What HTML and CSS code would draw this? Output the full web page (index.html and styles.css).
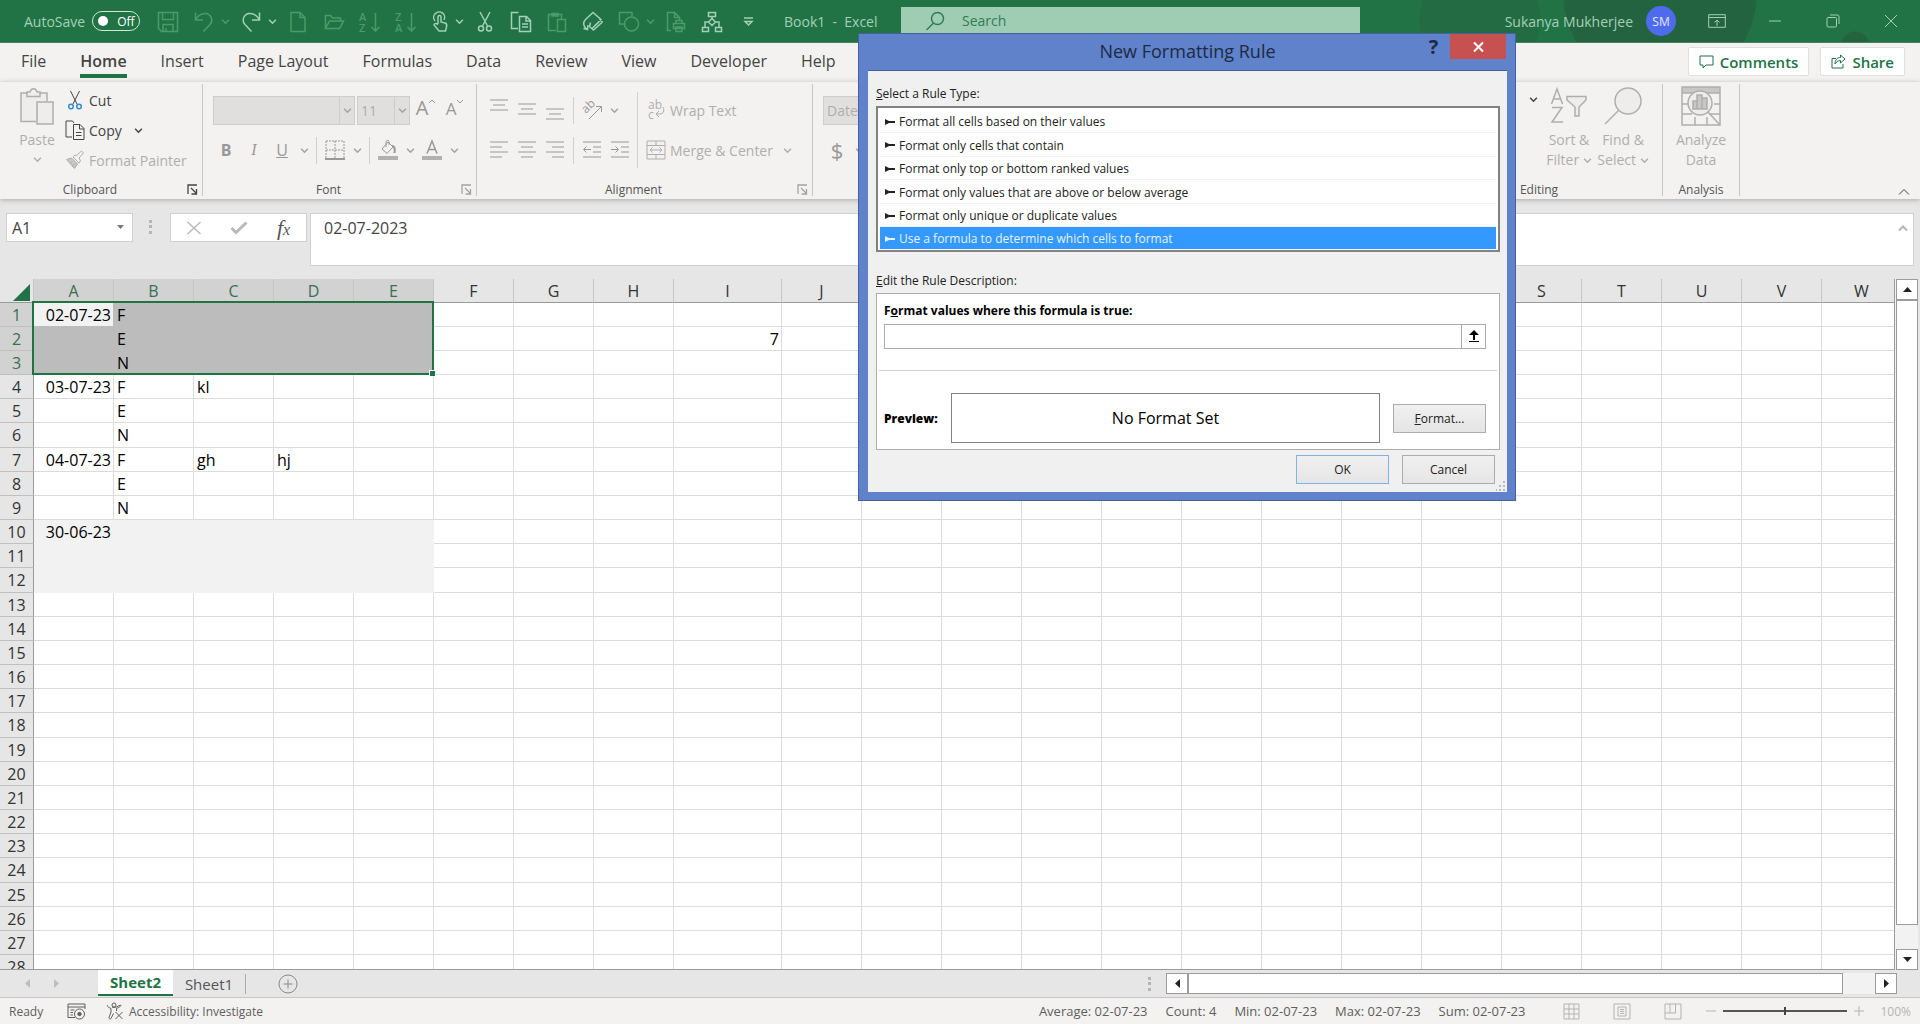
FILE: index.html
```html
<!DOCTYPE html>
<html lang="en">
<head>
    <meta charset="utf-8" />
    <title>Book1 - Excel</title>
    <link rel="stylesheet" href="styles.css">
</head>
<body>
    <svg class="sprite" aria-hidden="true">
        <symbol id="caret" viewBox="0 0 8 8"><path d="M1 2.5l3 3 3-3" fill="none" stroke="currentColor" stroke-width="1.4" /></symbol>
        <symbol id="launcher" viewBox="0 0 11 11"><path d="M1 10V1h9M4 4l5 5M9.500 5v5H4.500" fill="none" stroke="currentColor" stroke-width="1.300" /></symbol>
    </svg>

    <!-- Title bar -->
    <header class="titlebar">
        <label class="autosave">AutoSave
            <span class="switch"><input type="checkbox" class="switch-input" /><span class="knob"></span>Off</span>
        </label>
        <div class="quick">
            <button class="q dim" aria-label="Save"><svg width="22" height="22" viewBox="0 0 22 22"><path d="M1.500 1.500h19v19h-16l-3-3zM5.500 1.500v7h11v-7M6 20.500v-7h10v7M9 17v3.500" /></svg></button>
            <button class="q dim" aria-label="Undo"><svg width="20" height="22" viewBox="0 0 20 22"><path d="M1.500 1.500v7.500h7.500M1.500 9C4 4.500 8 2 12 2.500c5.500 1 7.500 7 4 11L9.500 20.500" /></svg></button>
            <button class="q-caret dim" aria-label="Undo list"><svg width="9" height="9"><use href="#caret" /></svg></button>
            <button class="q" aria-label="Redo"><svg width="20" height="22" viewBox="0 0 20 22"><path d="M18.500 1.500v7.500H11M18.500 9C16 4.500 12 2 8 2.500c-5.500 1-7.500 7-4 11L10.500 20.500" /></svg></button>
            <button class="q-caret" aria-label="Redo list"><svg width="9" height="9"><use href="#caret" /></svg></button>
            <button class="q dim" aria-label="New"><svg width="16" height="22" viewBox="0 0 16 22"><path d="M1 1.500h9l5 5v14H1zM10 1.500v5h5" /></svg></button>
            <button class="q dim" aria-label="Open"><svg width="21" height="18" viewBox="0 0 21 18"><path d="M1.500 15.500V2.500h5l2 2.500h8v3M1.500 15.500l4-7.500h14l-4 7.500z" /></svg></button>
            <button class="q dim" aria-label="Sort A to Z"><svg width="22" height="22" viewBox="0 0 22 22"><text x="0" y="10">A</text><text x="0" y="21">Z</text><path d="M16.500 2v18M12.500 16l4 4 4-4" /></svg></button>
            <button class="q dim" aria-label="Sort Z to A"><svg width="22" height="22" viewBox="0 0 22 22"><text x="0" y="10">Z</text><text x="0" y="21">A</text><path d="M16.500 2v18M12.500 16l4 4 4-4" /></svg></button>
            <button class="q narrow" aria-label="Touch mode"><svg width="16" height="22" viewBox="0 0 16 22"><path d="M6 13V6c0-2 3-2 3 0v5l4 1c2 .500 2 2 1.500 4l-1 4H7l-5-6c0-1.500 1.500-2 4-.500M3 10a5.500 5.500 0 1 1 9-1" /></svg></button>
            <button class="q-caret" aria-label="Touch mode options"><svg width="9" height="9"><use href="#caret" /></svg></button>
            <button class="q" aria-label="Cut"><svg width="16" height="22" viewBox="0 0 16 22"><path d="M3 1l7.500 14M13 1L5.500 15" /><circle cx="4" cy="17.500" r="2.500" /><circle cx="12" cy="17.500" r="2.500" /></svg></button>
            <button class="q" aria-label="Copy"><svg width="22" height="22" viewBox="0 0 22 22"><path d="M8 17.500H1.500v-16h7M9.500 5.500h7l4 4v11h-11zM16 5.500V10h4.500M12 13h6M12 16h6" /></svg></button>
            <button class="q dim" aria-label="Paste"><svg width="20" height="22" viewBox="0 0 20 22"><path d="M9 19.500H1.500v-16h13V8M5 5V2.500h6V5zM10.500 8.500h8v12h-8z" /></svg></button>
            <button class="q" aria-label="Clear"><svg width="22" height="22" viewBox="0 0 22 22"><path d="M3.500 8.500L11 1.500l8 7-6.500 6.500M3.500 8.500c-3 3-2 7 1 9.500M1.500 17.500l4 1 .500-4.500M20.500 11l-9 8-4-3.500 1-4M20.500 11l-3-3M10 17.500l7-6.500" /></svg></button>
            <button class="q dim" aria-label="Shapes"><svg width="22" height="22" viewBox="0 0 22 22"><path d="M7 13H1.500V1.500H14V5" /><circle cx="13.500" cy="13" r="7" /></svg></button>
            <button class="q-caret dim" aria-label="Shapes list"><svg width="9" height="9"><use href="#caret" /></svg></button>
            <button class="q dim" aria-label="Quick print"><svg width="20" height="22" viewBox="0 0 20 22"><path d="M5 19.500H1.500v-18h7l5 5V10M8.500 1.500v5h5M7.500 17.500v-5h11v5zM10 12.500V9.500h6v3M10 16h6v4.500h-6z" /></svg></button>
            <button class="q" aria-label="Diagram"><svg width="22" height="22" viewBox="0 0 22 22"><path d="M7.500 1.500h7v4h-7zM11 5.500v3M11 7.500l3.500 3.500L11 14.500 7.500 11zM7.500 11H4v5M14.500 11H18v5M1.500 16.500h6v4h-6zM14.500 16.500h6v4h-6z" /></svg></button>
            <button class="q" aria-label="Customize toolbar"><svg width="11" height="10" viewBox="0 0 11 10"><path d="M1 1h9M2 4.500l3.500 3.500L9 4.500z" /></svg></button>
        </div>
        <div class="doc-name">Book1&nbsp; -&nbsp; Excel</div>
        <div class="search">
            <svg width="20" height="20" viewBox="0 0 20 20"><circle cx="12.500" cy="7.500" r="6" /><path d="M8.500 12L1.500 19" /></svg>
            <input type="text" class="search-input" placeholder="Search" aria-label="Search" />
        </div>
        <div class="account">
            <span>Sukanya Mukherjee</span>
            <button class="avatar" aria-label="Account">SM</button>
        </div>
        <div class="window-buttons">
            <button aria-label="Ribbon display"><svg width="18" height="14" viewBox="0 0 18 14"><path d="M.700.700h16.600v12.600H.700zM.700 3.500h16.600M9 12V6M6.500 8.500L9 6l2.500 2.500" /></svg></button>
            <button aria-label="Minimize"><svg width="14" height="14" viewBox="0 0 14 14"><path d="M1 7h12" /></svg></button>
            <button aria-label="Restore"><svg width="14" height="14" viewBox="0 0 14 14"><path d="M1 4.500c0-.500.500-1 1-1h7.500c.500 0 1 .500 1 1V12c0 .500-.500 1-1 1H2c-.500 0-1-.500-1-1zM4 1h7c1.500 0 2 .500 2 2v7" /></svg></button>
            <button aria-label="Close"><svg width="14" height="14" viewBox="0 0 14 14"><path d="M1 1l12 12M13 1L1 13" /></svg></button>
        </div>
    </header>

    <!-- Ribbon tabs -->
    <nav class="tabs">
        <a href="#">File</a>
        <a href="#" class="active">Home</a>
        <a href="#">Insert</a>
        <a href="#">Page Layout</a>
        <a href="#">Formulas</a>
        <a href="#">Data</a>
        <a href="#">Review</a>
        <a href="#">View</a>
        <a href="#">Developer</a>
        <a href="#">Help</a>
        <div class="tab-actions">
            <button class="action"><svg width="15" height="14" viewBox="0 0 15 14"><path d="M1 1h13v9H7l-3 3v-3H1z" /></svg>Comments</button>
            <button class="action"><svg width="15" height="15" viewBox="0 0 15 15"><path d="M5 4.500H1v9.500h11v-4M9.500 1l4.500 4-4.500 4V6.500C7 6.500 5 8 4 10c0-4 2-6.500 5.500-6.500z" /></svg>Share</button>
        </div>
    </nav>

    <!-- Ribbon -->
    <section class="ribbon">
        <div class="group clipboard">
            <div class="group-body">
                <button class="big off paste">
                    <svg width="36" height="40" viewBox="0 0 36 40"><path class="fill" d="M2 7h26v29H2zM18 16h16v22H18z" /><path d="M17 35.500H2V7h6M21 7h7v8M8 10.500V6h3c1-4.500 6-4.500 7 0h3v4.500zM18 16h16v22H18z" /></svg>
                    Paste
                    <svg class="paste-caret" width="9" height="9"><use href="#caret" /></svg>
                </button>
                <div class="stack">
                    <button class="line"><svg width="20" height="20" viewBox="0 0 20 20"><path d="M5.500 1L12 14M14.500 1L8 14" /><circle class="blue" cx="6" cy="16.500" r="2.300" /><circle class="blue" cx="14" cy="16.500" r="2.300" /></svg>Cut</button>
                    <button class="line"><svg width="20" height="20" viewBox="0 0 20 20"><path d="M7 17H1V1h6.500l1.500 2M8.500 4.500h6.500l4 4v11H8.500zM14.500 4.500V9H19M11 12.500h5.500M11 15.500h5.500" /></svg>Copy<svg class="copy-caret" width="9" height="9"><use href="#caret" /></svg></button>
                    <button class="line off"><svg width="20" height="20" viewBox="0 0 20 20"><path class="shade" d="M1.500 9.500l5-1.500 6 6-3 4.500z" /><path d="M1.500 9.500l5-1.500 6 6-3 4.500zM5 13l2-1M7.500 16l2-2M8 7l6 6 1.500-2-1.500-3 4.500-5-2-2-5 4.500L10 5z" /></svg>Format Painter</button>
                </div>
            </div>
            <div class="group-label">Clipboard<button class="launcher on" aria-label="Clipboard settings"><svg width="11" height="11"><use href="#launcher" /></svg></button></div>
        </div>

        <div class="group font">
            <div class="group-body rows">
                <div class="row">
                    <span class="combo"><select class="font-name" disabled aria-label="Font"><option></option></select><i><svg width="9" height="9"><use href="#caret" /></svg></i></span>
                    <span class="combo"><select class="font-size" disabled aria-label="Font size"><option>11</option></select><i><svg width="9" height="9"><use href="#caret" /></svg></i></span>
                    <button class="tool grow" aria-label="Increase font size">A<svg width="8" height="8" viewBox="0 0 8 8"><path d="M1 5l3-3 3 3" /></svg></button>
                    <button class="tool shrink" aria-label="Decrease font size">A<svg width="8" height="8" viewBox="0 0 8 8"><path d="M1 2l3 3 3-3" /></svg></button>
                </div>
                <div class="row">
                    <button class="tool bold">B</button>
                    <button class="tool italic">I</button>
                    <button class="tool underline">U</button>
                    <button class="drop" aria-label="Underline styles"><svg width="9" height="9"><use href="#caret" /></svg></button>
                    <span class="sep"></span>
                    <button class="tool" aria-label="Borders"><svg width="20" height="20" viewBox="0 0 20 20"><path stroke-dasharray="2 1" d="M1 1h18v17M1 1v17M10 1v17M1 10h18" /><path stroke-width="2" d="M0 19h20" /></svg></button>
                    <button class="drop" aria-label="Border styles"><svg width="9" height="9"><use href="#caret" /></svg></button>
                    <span class="sep"></span>
                    <button class="tool" aria-label="Fill color"><svg width="20" height="20" viewBox="0 0 20 20"><path d="M10 2L4 9l5 4.500L15 7zM8 7V1.500c0-1.500 3-1.500 3 0V5" /><path stroke-width="2" d="M14 6c3 0 3 3 2.500 7" /><path class="bar" d="M0 16h20v4H0z" /></svg></button>
                    <button class="drop" aria-label="Fill colors"><svg width="9" height="9"><use href="#caret" /></svg></button>
                    <button class="tool" aria-label="Font color"><svg width="20" height="20" viewBox="0 0 20 20"><path stroke-width="1.500" d="M5 13.500L10 1l5 12.500M6.500 9.500h7" /><path class="bar" d="M0 16h20v4H0z" /></svg></button>
                    <button class="drop" aria-label="Font colors"><svg width="9" height="9"><use href="#caret" /></svg></button>
                </div>
            </div>
            <div class="group-label">Font<button class="launcher" aria-label="Font settings"><svg width="11" height="11"><use href="#launcher" /></svg></button></div>
        </div>

        <div class="group alignment">
            <div class="group-body">
                <div class="rows">
                    <div class="row">
                        <button class="tool" aria-label="Top align"><svg width="20" height="22" viewBox="0 0 20 22"><path d="M1 1h18M4 6h12M1 11h18" /></svg></button>
                        <button class="tool" aria-label="Middle align"><svg width="20" height="22" viewBox="0 0 20 22"><path d="M1 5h18M4 10h12M1 15h18" /></svg></button>
                        <button class="tool" aria-label="Bottom align"><svg width="20" height="22" viewBox="0 0 20 22"><path d="M1 10h18M4 15h12M1 20h18" /></svg></button>
                        <span class="sep"></span>
                        <button class="tool" aria-label="Orientation"><svg width="22" height="20" viewBox="0 0 22 20"><text transform="rotate(-45 5 14)" x="5" y="14">ab</text><path d="M8 19L20 7M15 6.500h5.500V12" /></svg></button>
                        <button class="drop" aria-label="Orientation options"><svg width="9" height="9"><use href="#caret" /></svg></button>
                    </div>
                    <div class="row">
                        <button class="tool" aria-label="Align left"><svg width="20" height="18" viewBox="0 0 20 18"><path d="M1 1h18M1 6h12M1 11h18M1 16h12" /></svg></button>
                        <button class="tool" aria-label="Center"><svg width="20" height="18" viewBox="0 0 20 18"><path d="M1 1h18M4 6h12M1 11h18M4 16h12" /></svg></button>
                        <button class="tool" aria-label="Align right"><svg width="20" height="18" viewBox="0 0 20 18"><path d="M1 1h18M7 6h12M1 11h18M7 16h12" /></svg></button>
                        <span class="sep"></span>
                        <button class="tool" aria-label="Decrease indent"><svg width="20" height="18" viewBox="0 0 20 18"><path d="M1 1h18M11 6h8M11 11h8M1 16h18M9 8.500H1.500M4.500 5.500l-3 3 3 3" /></svg></button>
                        <button class="tool" aria-label="Increase indent"><svg width="20" height="18" viewBox="0 0 20 18"><path d="M1 1h18M11 6h8M11 11h8M1 16h18M1 8.500h7.500M5.500 5.500l3 3-3 3" /></svg></button>
                    </div>
                </div>
                <span class="tall-sep"></span>
                <div class="rows">
                    <button class="line off"><svg width="20" height="20" viewBox="0 0 20 20"><text x="2" y="9">ab</text><text x="2" y="19">c</text><path d="M17 7c2 4 0 7-3 7h-4M13 11l-3 3 3 3" /></svg>Wrap Text</button>
                    <button class="line off"><svg width="20" height="20" viewBox="0 0 20 20"><path d="M1 1h18v18H1zM1 5.500h18M1 14.500h18M10 1v4.500M10 14.500V19M4 10h12M6.500 7.500L4 10l2.500 2.500M13.500 7.500L16 10l-2.500 2.500" /></svg>Merge &amp; Center<svg class="merge-caret" width="9" height="9"><use href="#caret" /></svg></button>
                </div>
            </div>
            <div class="group-label">Alignment<button class="launcher" aria-label="Alignment settings"><svg width="11" height="11"><use href="#launcher" /></svg></button></div>
        </div>

        <div class="group number">
            <div class="group-body rows">
                <div class="row">
                    <span class="combo"><select class="format" disabled aria-label="Number format"><option>Date</option></select><i><svg width="9" height="9"><use href="#caret" /></svg></i></span>
                </div>
                <div class="row">
                    <button class="tool dollar" aria-label="Accounting format">$</button>
                    <button class="drop" aria-label="Accounting formats"><svg width="9" height="9"><use href="#caret" /></svg></button>
                </div>
            </div>
        </div>

        <div class="group editing">
            <div class="group-body">
                <button class="drop sum" aria-label="AutoSum options"><svg width="9" height="9"><use href="#caret" /></svg></button>
                <button class="big off">
                    <svg width="38" height="40" viewBox="0 0 38 40"><path d="M1.500 18L7 3l5.500 15M3.500 13h7M2 21.500h10L2 36h11" /><path class="fill" d="M17 10.500h19v3.500l-7 7v9h-4v-9l-8-7z" /><path d="M17 10.500h19v3.500l-7 7v9h-4v-9l-8-7z" /></svg>
                    Sort &amp;
                    <span>Filter <svg width="9" height="9"><use href="#caret" /></svg></span>
                </button>
                <button class="big off">
                    <svg width="38" height="40" viewBox="0 0 38 40"><circle class="fill" cx="24" cy="15" r="13" /><circle cx="24" cy="15" r="13" /><path d="M15 24L1 38" /></svg>
                    Find &amp;
                    <span>Select <svg width="9" height="9"><use href="#caret" /></svg></span>
                </button>
            </div>
            <div class="group-label">Editing</div>
        </div>

        <div class="group analysis">
            <div class="group-body">
                <button class="big off">
                    <svg width="40" height="40" viewBox="0 0 40 40"><path class="shade" d="M1 1h38v6H1z" /><path d="M1 1h38v38H1zM1 7h38M1 18h6M33 18h6M1 28h10M28 28h11M14 31v8M26 31v8" /><circle class="fill" cx="19" cy="17" r="12" /><circle cx="19" cy="17" r="12" /><path class="shade" d="M12 15h4v8h-4zM16 9h5v14h-5zM21 12h5v11h-5z" /><path d="M12 15h4v8h-4zM16 9h5v14h-5zM21 12h5v11h-5zM27 26l12 13" /></svg>
                    Analyze
                    <span>Data</span>
                </button>
            </div>
            <div class="group-label">Analysis</div>
        </div>
        <button class="collapse" aria-label="Collapse ribbon"><svg width="12" height="9" viewBox="0 0 12 9"><path d="M1 7.500l5-5 5 5" /></svg></button>
    </section>

    <!-- Formula bar -->
    <section class="formula-bar">
        <div class="name-box">
            <input type="text" value="A1" aria-label="Name box" />
            <svg width="7" height="5" viewBox="0 0 7 5"><path d="M0 0h7L3.500 4z" /></svg>
        </div>
        <span class="dots"></span>
        <div class="fx-buttons">
            <button aria-label="Cancel entry"><svg width="16" height="14" viewBox="0 0 16 14"><path d="M1.500 1l13 12M14.500 1l-13 12" /></svg></button>
            <button aria-label="Enter"><svg width="18" height="14" viewBox="0 0 18 14"><path stroke-width="3" d="M1.500 7L6 11.500 16.500 1.500" /></svg></button>
            <button class="fx" aria-label="Insert function">f<small>x</small></button>
        </div>
        <div class="formula">
            <input type="text" value="02-07-2023" aria-label="Formula" />
            <svg width="10" height="8" viewBox="0 0 10 8"><path d="M1 6.500l4-4 4 4" /></svg>
        </div>
    </section>

    <!-- Worksheet -->
    <main class="sheet">
        <div class="grid">
            <table id="cells"></table>
            <div class="selection"></div>
        </div>
        <div class="vscroll">
            <button aria-label="Scroll up"><svg width="9" height="5" viewBox="0 0 9 5"><path d="M0 5h9L4.500 0z" /></svg></button>
            <div class="vthumb"></div>
            <button aria-label="Scroll down"><svg width="9" height="5" viewBox="0 0 9 5"><path d="M0 0h9L4.500 5z" /></svg></button>
        </div>
    </main>

    <section class="sheet-tabs">
        <div class="arrows">
            <button aria-label="Previous sheet"><svg width="5" height="9" viewBox="0 0 5 9"><path d="M5 0v9L0 4.500z" /></svg></button>
            <button aria-label="Next sheet"><svg width="5" height="9" viewBox="0 0 5 9"><path d="M0 0v9l5-4.500z" /></svg></button>
        </div>
        <button class="sheet-tab current">Sheet2</button>
        <button class="sheet-tab">Sheet1</button>
        <button class="add" aria-label="New sheet"><svg width="20" height="20" viewBox="0 0 20 20"><circle cx="10" cy="10" r="9" /><path d="M10 5.500v9M5.500 10h9" /></svg></button>
        <span class="dots"></span>
        <div class="hscroll">
            <button aria-label="Scroll left"><svg width="5" height="9" viewBox="0 0 5 9"><path d="M5 0v9L0 4.500z" /></svg></button>
            <div class="hthumb"></div>
            <button aria-label="Scroll right"><svg width="5" height="9" viewBox="0 0 5 9"><path d="M0 0v9l5-4.500z" /></svg></button>
        </div>
    </section>

    <!-- Status bar -->
    <footer class="status">
        <span class="ready">Ready</span>
        <button aria-label="Record macro"><svg width="19" height="17" viewBox="0 0 19 17"><path d="M8 14.500H1V1h17v5M1 4h17M3.500 7h4M3.500 9.500h2.500M3.500 12h2.500" /><circle cx="12.500" cy="11" r="5" /><circle class="solid" cx="12.500" cy="11" r="1.700" /></svg></button>
        <button class="access"><svg width="18" height="18" viewBox="0 0 18 18"><circle cx="8" cy="3" r="2" /><path d="M1.500 3c-.500 1 0 2 3.500 3.500V10L3 15.500c0 2 1.500 1.500 2 1l2.500-5M6 5c1.500.700 3 .700 4.500 0l4-2c1 .500.500 1.500-4 3.500V9M9.500 10l7 7M16.500 10l-7 7" /></svg>Accessibility: Investigate</button>
        <div class="stats">
            <span>Average: 02-07-23</span>
            <span>Count: 4</span>
            <span>Min: 02-07-23</span>
            <span>Max: 02-07-23</span>
            <span>Sum: 02-07-23</span>
        </div>
        <div class="views">
            <button aria-label="Normal view"><svg width="17" height="17" viewBox="0 0 17 17"><path d="M1 1h15v15H1zM6 1v15M11 1v15M1 6h15M1 11h15" /></svg></button>
            <button aria-label="Page layout view"><svg width="18" height="17" viewBox="0 0 18 17"><path d="M1 1h16v15H1zM5 4h8v9H5zM7 6.500h4M7 8.500h4M7 10.500h4" /></svg></button>
            <button aria-label="Page break view"><svg width="18" height="17" viewBox="0 0 18 17"><path d="M1 1h16v15H1zM6 1v9M1 10h10.500V1" /></svg></button>
        </div>
        <div class="zoom">
            <button aria-label="Zoom out"><svg width="10" height="10" viewBox="0 0 10 10"><path d="M0 5h10" /></svg></button>
            <input type="range" min="0" max="200" value="100" aria-label="Zoom" />
            <button aria-label="Zoom in"><svg width="10" height="10" viewBox="0 0 10 10"><path d="M0 5h10M5 0v10" /></svg></button>
            <span class="percent">100%</span>
        </div>
    </footer>

    <!-- Dialog -->
    <div class="dialog" role="dialog" aria-labelledby="dialog-title">
        <div class="dialog-head">
            <h1 id="dialog-title">New Formatting Rule</h1>
            <div class="dialog-controls">
                <button class="help" aria-label="Help">?</button>
                <button class="close" aria-label="Close"><svg width="11" height="10" viewBox="0 0 11 10"><path d="M1 .500l9 9M10 .500l-9 9" /></svg></button>
            </div>
        </div>
        <div class="dialog-body">
            <div class="caption" id="type-label"><u>S</u>elect a Rule Type:</div>
            <ul class="rule-list" aria-labelledby="type-label">
                <li><svg width="10" height="6" viewBox="0 0 10 6"><path d="M0 0l4 2h6v2H4L0 6z" /></svg>Format all cells based on their values</li>
                <li><svg width="10" height="6" viewBox="0 0 10 6"><path d="M0 0l4 2h6v2H4L0 6z" /></svg>Format only cells that contain</li>
                <li><svg width="10" height="6" viewBox="0 0 10 6"><path d="M0 0l4 2h6v2H4L0 6z" /></svg>Format only top or bottom ranked values</li>
                <li><svg width="10" height="6" viewBox="0 0 10 6"><path d="M0 0l4 2h6v2H4L0 6z" /></svg>Format only values that are above or below average</li>
                <li><svg width="10" height="6" viewBox="0 0 10 6"><path d="M0 0l4 2h6v2H4L0 6z" /></svg>Format only unique or duplicate values</li>
                <li class="selected"><svg width="10" height="6" viewBox="0 0 10 6"><path d="M0 0l4 2h6v2H4L0 6z" /></svg>Use a formula to determine which cells to format</li>
            </ul>
            <div class="caption second"><u>E</u>dit the Rule Description:</div>
            <div class="description">
                <label for="rule-formula">F<u>o</u>rmat values where this formula is true:</label>
                <div class="formula-field">
                    <input type="text" id="rule-formula" />
                    <button aria-label="Collapse dialog"><svg width="10" height="13" viewBox="0 0 10 13"><path d="M5 0l5 5H6v5H4V5H0zM0 11h10v1H0z" /></svg></button>
                </div>
                <hr />
                <div class="preview-row">
                    <strong>Preview:</strong>
                    <div class="preview">No Format Set</div>
                    <button class="btn"><span><u>F</u>ormat...</span></button>
                </div>
            </div>
            <div class="dialog-foot">
                <button class="btn default">OK</button>
                <button class="btn">Cancel</button>
            </div>
            <svg class="grip" width="10" height="10" viewBox="0 0 10 10"><path d="M7 0h2v2H7zM7 4h2v2H7zM7 8h2v2H7zM3 4h2v2H3zM3 8h2v2H3zM0 8h1v2H0z" /></svg>
        </div>
    </div>

    <script src="script.js"></script>
</body>
</html>
```
FILE: styles.css
```css
* {
    box-sizing: border-box;
}

body {
    margin: 0;
    height: 100vh;
    display: flex;
    flex-direction: column;
    overflow: hidden;
    background: #e6e6e6;
    color: #444;
    font-family: "Open Sans", "Noto Sans", sans-serif;
    font-size: 14px;
}

button, input, select {
    font: inherit;
    color: inherit;
    margin: 0;
    padding: 0;
    border: 0;
    background: none;
}

button {
    display: flex;
    align-items: center;
    justify-content: center;
    white-space: nowrap;
}

svg {
    flex: none;
    fill: none;
    stroke: currentColor;
    overflow: visible;
}

svg text {
    fill: currentColor;
    stroke: none;
    font-size: 12px;
}

.sprite {
    position: absolute;
    width: 0;
    height: 0;
}

/* title bar */
.titlebar {
    flex: none;
    height: 43px;
    display: flex;
    align-items: center;
    padding-left: 24px;
    color: #a3d0b6;
    background:
        radial-gradient(circle at 1660px -6px, #24633f 96px, transparent 97px),
        radial-gradient(circle at 1855px 46px, #24633f 14px, transparent 15px),
        radial-gradient(circle at 1480px 20px, #226b43 60px, transparent 61px),
        #217346;
    border-bottom: 1px solid #3f8560;
}

.autosave {
    display: flex;
    align-items: center;
    gap: 7px;
    width: 126px;
    flex: none;
}

.switch {
    display: flex;
    align-items: center;
    gap: 9px;
    width: 48px;
    height: 20px;
    padding-left: 5px;
    border: 1px solid #cfe6d8;
    border-radius: 10px;
    color: #fff;
    font-size: 12px;
}

.switch-input {
    appearance: none;
    position: absolute;
}

.knob {
    width: 10px;
    height: 10px;
    border-radius: 50%;
    background: #fff;
}

.quick {
    display: flex;
    flex: none;
}

.q {
    width: 36px;
    height: 30px;
    padding-top: 2px;
}

.q svg {
    stroke-width: 1.5;
}

.q text {
    font-size: 11px;
    font-weight: 600;
}

.narrow {
    width: 32px;
}

.q-caret {
    width: 15px;
    margin-left: -4px;
}

.dim {
    color: #4c9a6c;
}

.doc-name {
    margin-left: 18px;
    width: 117px;
    flex: none;
    white-space: nowrap;
}

.search {
    align-self: flex-end;
    flex: 0 1 459px;
    height: 35px;
    display: flex;
    align-items: center;
    gap: 17px;
    padding: 0 24px 8px;
    background: #9fcdb3;
    color: #2f7d53;
}

.search svg {
    stroke-width: 1.5;
}

.search-input {
    flex: 1;
}

.search-input::placeholder {
    color: #2f7d53;
}

.account {
    margin-left: auto;
    display: flex;
    align-items: center;
    gap: 13px;
    white-space: nowrap;
}

.avatar {
    width: 30px;
    height: 30px;
    border-radius: 50%;
    background: #4f6bed;
    color: #e4e9ff;
    font-size: 12px;
}

.window-buttons {
    display: flex;
    margin-left: 12px;
}

.window-buttons button {
    width: 58px;
    height: 30px;
}

/* tabs */
.tabs {
    flex: none;
    height: 39px;
    display: flex;
    padding-left: 4px;
    background: #f3f2f1;
    font-size: 16px;
}

.tabs a {
    display: flex;
    align-items: flex-start;
    margin: 0 17px;
    padding-top: 7px;
    height: 35px;
    line-height: 22px;
    white-space: nowrap;
    color: #444;
    text-decoration: none;
}

.tabs .active {
    font-weight: 600;
    border-bottom: 4px solid #217346;
}

.tab-actions {
    margin-left: auto;
    display: flex;
    gap: 11px;
    padding: 4px 15px 0 0;
    font-size: 15px;
}

.action {
    gap: 6px;
    height: 29px;
    padding: 0 10px;
    border: 1px solid #e1dfdd;
    border-radius: 2px;
    background: #fff;
    color: #217346;
    font-weight: 600;
}

/* ribbon */
.ribbon {
    flex: none;
    height: 117px;
    display: flex;
    position: relative;
    background: #f3f2f1;
    box-shadow: 0 1px 5px #aaa;
    color: #a5a3a1;
}

.group {
    display: flex;
    flex-direction: column;
    flex: none;
    height: 112px;
    margin-top: 2px;
    border-right: 1px solid #c8c6c4;
}

.group-body {
    display: flex;
    height: 97px;
}

.group-label {
    display: flex;
    justify-content: center;
    position: relative;
    color: #555;
    font-size: 12px;
    line-height: 18px;
    height: 15px;
}

.clipboard .group-label, .font .group-label, .alignment .group-label {
    padding-right: 22px;
}

.launcher {
    position: absolute;
    right: 4px;
    top: 3px;
    color: #a5a3a1;
}

.launcher.on {
    color: #444;
}

.fill, .shade {
    fill: #efedec;
    stroke: none;
}

.shade {
    fill: #c9c7c5;
}

.bar {
    fill: #b3b1af;
    stroke: none;
}

.blue {
    stroke: #2e8ccf;
    stroke-width: 1.5;
}

.big {
    flex-direction: column;
    justify-content: flex-start;
    line-height: 20px;
    padding-top: 2px;
    height: 94px;
}

.big > svg:first-child {
    margin-bottom: 4px;
    stroke-width: 1.5;
}

.off {
    color: #b0aeac;
}

.clipboard { width: 203px; }
.font { width: 274px; }
.alignment { width: 336px; }
.number { flex: 1; }
.editing { width: 247px; }
.analysis { width: 77px; margin-right: 180px; }

.paste {
    width: 54px;
    margin-left: 10px;
}

.paste-caret {
    margin-top: 5px;
}

.stack {
    padding: 1px 0 0 1px;
}

.line {
    height: 30px;
    gap: 4px;
    justify-content: flex-start;
    color: #444;
}

.line.off {
    color: #b0aeac;
}

.copy-caret {
    margin-left: 8px;
}

.merge-caret {
    margin-left: 6px;
}

.rows {
    display: flex;
    flex-direction: column;
    gap: 10px;
    padding-top: 11px;
}

.row {
    display: flex;
    align-items: center;
    height: 30px;
}

.font .rows, .number .rows {
    padding-left: 10px;
}

.font .row + .row {
    margin-left: -1px;
}

.alignment .group-body {
    padding-left: 8px;
}

.combo {
    display: flex;
    height: 29px;
    margin-right: 2px;
    border: 1px solid #cfcdcb;
    background: #e1dfdd;
}

.combo select {
    appearance: none;
    opacity: 1;
    padding-left: 3px;
    color: #b0aeac;
}

.combo i {
    display: flex;
    align-items: center;
    justify-content: center;
    width: 15px;
    border-left: 1px solid #cfcdcb;
}

.font-name { width: 125px; }
.font-size { width: 36px; }
.format { width: 110px; }

.tool {
    width: 28px;
    height: 30px;
    font-size: 16px;
    color: #9a9896;
}

.grow, .shrink {
    width: 30px;
    align-items: flex-start;
    line-height: 26px;
    font-size: 20px;
}

.grow {
    width: 28px;
}

.grow svg, .shrink svg {
    margin-top: 3px;
}

.shrink {
    font-size: 17px;
    line-height: 28px;
}

.bold { font-weight: 700; }
.italic { font-family: "Liberation Serif", serif; font-style: italic; }
.underline { text-decoration: underline; }
.dollar { font-size: 22px; }

.drop {
    width: 16px;
    height: 30px;
}

.sep {
    width: 1px;
    height: 27px;
    margin: 0 4px;
    background: #d2d0ce;
}

.tall-sep {
    width: 1px;
    height: 76px;
    margin: 8px 8px 0 auto;
    background: #d2d0ce;
}

.alignment .rows:last-child {
    width: 166px;
}

.editing .group-body {
    justify-content: flex-end;
    gap: 2px;
    padding-right: 13px;
}

.editing .big {
    width: 52px;
}

.sum {
    color: #444;
}

.analysis .big {
    width: 100%;
}

.collapse {
    position: absolute;
    right: 10px;
    bottom: 3px;
    color: #444;
}

/* formula bar */
.formula-bar {
    flex: none;
    display: flex;
    align-items: flex-start;
    height: 80px;
    padding: 14px 6px 0;
    font-size: 16px;
}

.name-box, .fx-buttons {
    display: flex;
    align-items: center;
    width: 127px;
    height: 29px;
    padding-right: 8px;
    border: 1px solid #d0d0d0;
    background: #fff;
}

.name-box input {
    width: 110px;
    padding-left: 5px;
}

.name-box path {
    fill: #777;
    stroke: none;
}

.dots {
    width: 3px;
    height: 14px;
    border-left: 3px dotted #b5b5b5;
}

.formula-bar .dots {
    margin: 7px 18px 0 16px;
}

.fx-buttons {
    width: 137px;
    padding: 0;
    color: #b9b9b9;
    stroke-width: 1.5;
}

.fx-buttons button {
    flex: 1;
}

.fx {
    color: #555;
    font-family: "Liberation Serif", serif;
    font-style: italic;
    font-size: 22px;
    line-height: 24px;
}

.fx small {
    font-size: 16px;
    padding-top: 4px;
}

.formula {
    flex: 1;
    display: flex;
    align-items: flex-start;
    height: 53px;
    margin-left: 3px;
    padding: 3px 5px 0 13px;
    border: 1px solid #d0d0d0;
    background: #fff;
}

.formula input {
    flex: 1;
}

.formula svg {
    margin-top: 7px;
    stroke: #b5b5b5;
    stroke-width: 2;
}

/* worksheet */
.sheet {
    flex: 1;
    min-height: 0;
    display: flex;
    padding-right: 2px;
}

.grid {
    flex: 1;
    min-width: 0;
    position: relative;
    overflow: hidden;
    border-right: 1px solid #9b9b9b;
    border-bottom: 1px solid #9b9b9b;
}

table {
    table-layout: fixed;
    width: 1902px;
    border-spacing: 0;
    color: #000;
    font-size: 16px;
    line-height: 20px;
}

.col-head { width: 34px; }
.col { width: 80px; }
.col-wide { width: 108px; }

tr {
    height: 24px;
}

tbody tr:nth-child(6n) {
    height: 25px;
}

th {
    padding: 0;
    font-weight: 400;
    color: #333;
    background: #e6e6e6;
    border-right: 1px solid #c6c6c6;
    border-bottom: 1px solid #9b9b9b;
}

tbody th {
    border-right-color: #9b9b9b;
    border-bottom-color: #c0c0c0;
}

th.picked {
    background: #d2d2d2;
    color: #3a6f50;
}

.corner svg {
    display: block;
    margin: 3px 3px 0 auto;
    fill: #217346;
    stroke: none;
}

td {
    padding: 0 3px;
    background: #fff;
    border-right: 1px solid #dcdcdc;
    border-bottom: 1px solid #dcdcdc;
    white-space: nowrap;
}

td.num {
    padding: 0 2px;
    text-align: right;
}

td.in-range {
    background: #bcbcbc;
    border-color: #bcbcbc;
}

td.first {
    background: #f2f2f2;
}

td.shaded {
    background: #f2f2f2;
    border-color: #f2f2f2;
}

.selection {
    position: absolute;
    left: 32px;
    top: 22px;
    width: 402px;
    height: 74px;
    border: 2px solid #217346;
}

.selection::after {
    content: "";
    position: absolute;
    right: -3px;
    bottom: -3px;
    width: 5px;
    height: 5px;
    background: #217346;
    outline: 1px solid #fff;
}

.vscroll {
    width: 23px;
    display: flex;
    flex-direction: column;
    padding-left: 1px;
    background: #f2f2f2;
}

.vscroll button, .hscroll button {
    width: 22px;
    height: 21px;
    border: 1px solid #9b9b9b;
    background: #fff;
}

.vscroll path, .hscroll path, .arrows path {
    fill: #222;
    stroke: none;
}

.vthumb {
    flex: 1;
    margin-bottom: 24px;
    border: 1px solid #9b9b9b;
    background: #fff;
}

/* sheet tabs */
.sheet-tabs {
    flex: none;
    display: flex;
    align-items: center;
    height: 28px;
    padding-right: 23px;
    border-bottom: 1px solid #c6c6c6;
    font-size: 15px;
}

.arrows {
    display: flex;
    gap: 24px;
    width: 98px;
    padding-left: 25px;
}

.sheet-tabs .arrows path {
    fill: #bdbdbd;
}

.sheet-tab {
    height: 20px;
    width: 73px;
    border-right: 1px solid #aaa;
    color: #555;
}

.sheet-tab.current {
    align-self: flex-start;
    width: 75px;
    height: 26px;
    border-right: 0;
    border-bottom: 2px solid #217346;
    background: #fff;
    color: #217346;
    font-weight: 700;
}

.add {
    margin-left: 32px;
    color: #888;
}

.sheet-tabs .dots {
    margin: 0 15px 0 auto;
}

.hscroll {
    flex: 0 1 731px;
    display: flex;
    background: #f2f2f2;
}

.hthumb {
    flex: 1;
    margin-right: 32px;
    border: 1px solid #9b9b9b;
    background: #fff;
}

/* status bar */
.status {
    flex: none;
    display: flex;
    align-items: center;
    height: 26px;
    padding: 0 9px;
    background: #f3f2f1;
    color: #605e5c;
    font-size: 12px;
}

.ready {
    width: 58px;
}

.access {
    gap: 5px;
    margin-left: 20px;
}

.solid {
    fill: currentColor;
}

.stats {
    display: flex;
    gap: 18px;
    margin-left: auto;
    font-size: 13px;
}

.views {
    display: flex;
    gap: 33px;
    margin: 0 24px 0 38px;
    color: #b5b3b1;
}

.zoom {
    display: flex;
    align-items: center;
    gap: 7px;
    color: #b5b3b1;
}

.zoom input {
    appearance: none;
    width: 124px;
    height: 8px;
    background: linear-gradient(#555, #555) center / 100% 2px no-repeat;
}

.zoom input::-webkit-slider-thumb {
    appearance: none;
    width: 2px;
    height: 8px;
    background: #444;
}

.percent {
    margin-left: 9px;
}

/* dialog */
.dialog {
    position: absolute;
    left: 858px;
    top: 33px;
    width: 658px;
    padding: 0 8px 8px 9px;
    border: 1px solid #46609f;
    background: #5f82ca;
    color: #222;
    font-size: 12px;
}

.dialog-head {
    position: relative;
    height: 36px;
    display: flex;
    align-items: center;
    justify-content: center;
    color: #1d2a44;
}

h1 {
    margin: 0;
    font-size: 18px;
    font-weight: 400;
    line-height: 34px;
    height: 36px;
}

.dialog-controls {
    position: absolute;
    right: 0;
    top: 0;
    display: flex;
    align-items: flex-start;
}

.help {
    width: 33px;
    height: 24px;
    font-size: 20px;
    font-weight: 700;
}

.close {
    width: 56px;
    height: 25px;
    margin-right: 1px;
    background: #c75050;
    color: #fff;
    stroke-width: 2;
}

.dialog-body {
    position: relative;
    padding: 14px 7px 8px 8px;
    border-top: 1px solid #46609f;
    background: #f0f0f0;
}

.caption {
    line-height: 18px;
}

.second {
    margin: 20px 0 3px;
}

.rule-list {
    list-style: none;
    margin: 3px 0 0;
    padding: 2px 2px 1px;
    border: 2px solid #828282;
    background: #fff;
}

.rule-list li {
    display: flex;
    align-items: center;
    gap: 4px;
    height: 23px;
    padding: 1px 0 0 5px;
    border-bottom: 1px solid #f2f2f2;
}

.rule-list li:nth-child(even) {
    height: 24px;
}

.rule-list li.selected {
    height: 22px;
    border: 0;
    background: #3399ff;
    color: #e6f2ff;
}

.rule-list path {
    fill: currentColor;
    stroke: none;
}

.description {
    padding: 8px 2px 6px;
    border: 1px solid #adadad;
    background: #fff;
    color: #000;
    font-weight: 700;
}

.description label {
    display: block;
    margin-left: 5px;
    line-height: 18px;
}

.formula-field {
    display: flex;
    height: 25px;
    margin: 4px 11px 0 5px;
    border: 1px solid #ababab;
}

.formula-field input {
    flex: 1;
}

.formula-field button {
    width: 24px;
    border-left: 1px solid #ababab;
}

.formula-field path {
    fill: #000;
    stroke: none;
}

hr {
    margin: 21px 0 22px;
    border: 0;
    border-top: 1px solid #d0d0d0;
}

.preview-row {
    display: flex;
    align-items: center;
    padding: 0 11px 0 5px;
}

.preview-row strong {
    width: 67px;
}

.preview {
    flex: 1;
    height: 50px;
    display: flex;
    align-items: center;
    justify-content: center;
    margin-right: 13px;
    border: 1px solid #828282;
    font-size: 16px;
    font-weight: 400;
}

.btn {
    width: 93px;
    height: 29px;
    border: 1px solid #acacac;
    background: linear-gradient(#f0f0f0, #e5e5e5);
    font-weight: 400;
    color: #222;
}

.btn.default {
    border-color: #7eb4ea;
}

.dialog-foot {
    display: flex;
    justify-content: flex-end;
    gap: 13px;
    padding: 5px 5px 0 0;
}

.grip {
    position: absolute;
    right: 1px;
    bottom: 1px;
    fill: #bbb;
    stroke: none;
}
```
FILE: script.js
```js
var columns = "ABCDEFGHIJKLMNOPQRSTUVW".split("");
var rowCount = 28;
var values = {
    A1: "02-07-23", B1: "F", B2: "E", B3: "N", I2: "7",
    A4: "03-07-23", B4: "F", C4: "kl", B5: "E", B6: "N",
    A7: "04-07-23", B7: "F", C7: "gh", D7: "hj", B8: "E", B9: "N",
    A10: "30-06-23"
};

function cellClass(c, r, value) {
    var names = [];
    if (/^\d/.test(value)) names.push("num");
    if (c < 5 && r <= 3) names.push("in-range");
    if (c === 0 && r === 1) names.push("first");
    if (c < 5 && r >= 10 && r <= 12) names.push("shaded");
    return names.join(" ");
}

var html = '<colgroup><col class="col-head">';
columns.forEach(function (name) {
    html += '<col class="' + (name === "I" ? "col-wide" : "col") + '">';
});
html += '</colgroup><thead><tr><th class="corner"><svg width="17" height="17"><path d="M17 0v17H0z"/></svg></th>';
columns.forEach(function (name, c) {
    html += '<th class="' + (c < 5 ? "picked" : "") + '">' + name + "</th>";
});
html += "</tr></thead><tbody>";
for (var r = 1; r <= rowCount; r++) {
    html += '<tr><th class="' + (r <= 3 ? "picked" : "") + '">' + r + "</th>";
    for (var c = 0; c < columns.length; c++) {
        var value = values[columns[c] + r] || "";
        html += '<td class="' + cellClass(c, r, value) + '">' + value + "</td>";
    }
    html += "</tr>";
}
document.getElementById("cells").innerHTML = html + "</tbody>";
```
